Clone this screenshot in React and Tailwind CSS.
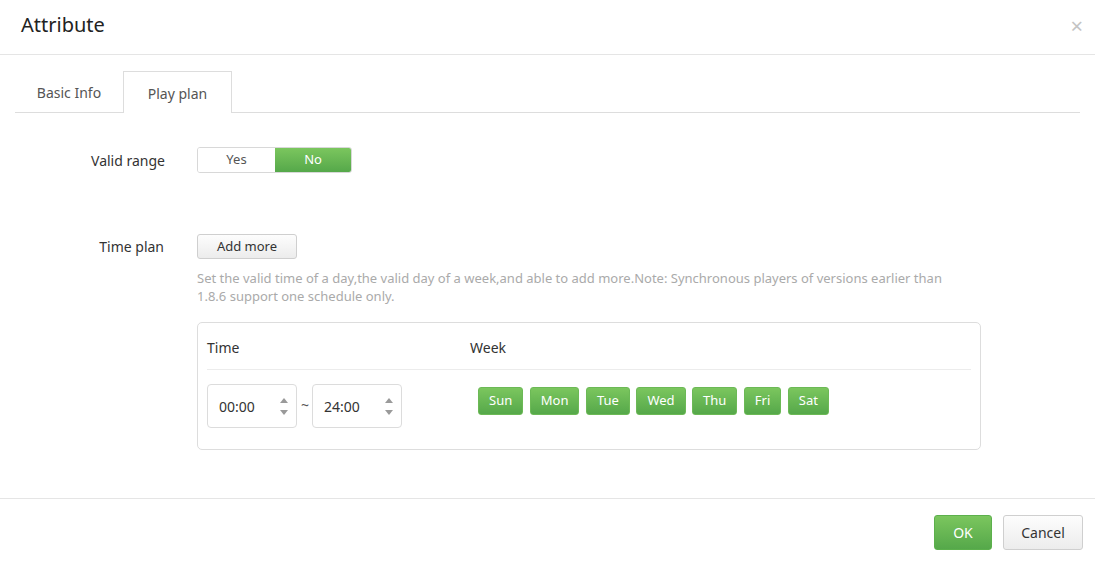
const days = ["Sun", "Mon", "Tue", "Wed", "Thu", "Fri", "Sat"];

const TimeInput = ({ value }) => {
  return (
    <div className="flex h-[44px] w-[90px] items-center justify-between rounded-[4px] border border-[#dcdcdc] bg-white pl-[11px] pr-[8px]">
      <span className="text-[14px] text-[#333]">{value}</span>
      <div className="flex flex-col items-center gap-[7px]">
        <span className="block h-0 w-0 border-x-[4px] border-b-[5px] border-x-transparent border-b-[#9a9a9a]" />
        <span className="block h-0 w-0 border-x-[4px] border-t-[5px] border-x-transparent border-t-[#9a9a9a]" />
      </div>
    </div>
  );
};

const App = () => {
  return (
    <div
      className="h-[563px] w-[1095px] overflow-hidden bg-white text-[14px] text-[#333]"
      style={{ fontFamily: '"Noto Sans", "Open Sans", sans-serif' }}
    >
      {/* header */}
      <div className="flex h-[55px] items-center justify-between border-b border-[#e5e5e5] pl-[21px] pr-[12px]">
        <h1 className="-mt-[4px] text-[20px] leading-none text-[#222]">Attribute</h1>
        <span className="-mt-[4px] text-[22px] leading-none text-[#c4c4c4]">×</span>
      </div>

      {/* tabs */}
      <div className="mx-[15px] mt-[16px] flex h-[42px] items-end border-b border-[#dddddd]">
        <div className="flex h-[41px] w-[108px] items-center justify-center text-[14px] text-[#555]">
          <span className="mt-[2px]">Basic Info</span>
        </div>
        <div className="-mb-px flex h-[42px] w-[109px] items-center justify-center border border-b-0 border-[#dddddd] bg-white text-[14px] text-[#555]">
          <span className="mt-[2px]">Play plan</span>
        </div>
      </div>

      {/* body */}
      <div className="h-[386px] border-b border-[#e5e5e5] px-[15px] pt-[34px]">
        <div className="flex items-center">
          <div className="w-[150px] text-right">Valid range</div>
          <div className="ml-[32px] flex h-[26px] overflow-hidden rounded-[3px] border border-[#d8d8d8] text-[13px]">
            <div className="flex w-[77px] items-center justify-center bg-white text-[#555]">Yes</div>
            <div className="flex w-[76px] items-center justify-center bg-gradient-to-b from-[#7bc65e] to-[#55a84a] text-white">
              No
            </div>
          </div>
        </div>

        <div className="mt-[61px] flex items-start">
          <div className="mt-[2px] w-[149px] text-right">Time plan</div>
          <div className="ml-[33px] w-[784px]">
            <button className="flex h-[25px] w-[100px] items-center justify-center rounded-[3px] border border-[#cfcfcf] bg-gradient-to-b from-[#fdfdfd] to-[#ececec] text-[13px] text-[#333]">
              Add more
            </button>
            <p className="mt-[10px] pr-[20px] text-[13px] leading-[18px] text-[#aaaaaa]">
              Set the valid time of a day,the valid day of a week,and able to add more.Note: Synchronous players of
              versions earlier than 1.8.6 support one schedule only.
            </p>

            <div className="mt-[17px] h-[128px] rounded-[5px] border border-[#dddddd] px-[9px]">
              <div className="flex h-[47px] items-center border-b border-[#ececec] pt-[3px]">
                <span className="w-[263px]">Time</span>
                <span>Week</span>
              </div>
              <div className="flex items-start pt-[14px]">
                <TimeInput value="00:00" />
                <span className="ml-[4px] mr-[3px] mt-[10px] text-[#555]">~</span>
                <TimeInput value="24:00" />
                <div className="ml-[76px] mt-[3px] flex gap-[6.5px]">
                  {days.map((d) => (
                    <div
                      key={d}
                      className="flex h-[28px] items-center rounded-[3px] border border-[#6cb956] bg-gradient-to-b from-[#7bc65e] to-[#55a84a] px-[10px] text-[13px] text-white"
                    >
                      {d}
                    </div>
                  ))}
                </div>
              </div>
            </div>
          </div>
        </div>
      </div>

      {/* footer */}
      <div className="flex justify-end gap-[11px] pr-[12px] pt-[16px]">
        <button className="flex h-[35px] w-[58px] items-center justify-center rounded-[3px] border border-[#5cb04c] bg-gradient-to-b from-[#7bc65e] to-[#55a84a] text-[14px] text-white">
          OK
        </button>
        <button className="flex h-[35px] w-[80px] items-center justify-center rounded-[3px] border border-[#cfcfcf] bg-gradient-to-b from-[#fdfdfd] to-[#ececec] text-[14px] text-[#333]">
          Cancel
        </button>
      </div>
    </div>
  );
};

export default App;
